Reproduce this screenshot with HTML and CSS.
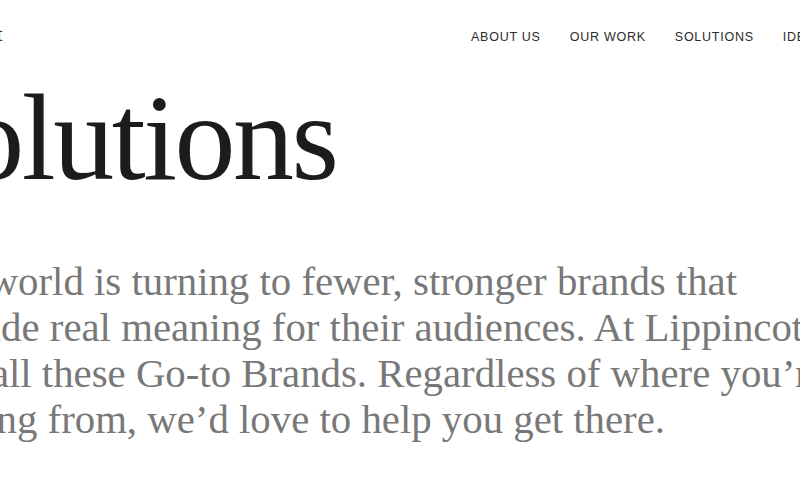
FILE: index.html
```html
<!DOCTYPE html>
<html lang="en">
<head>
<meta charset="utf-8">
<title>Solutions – Lippincott</title>
<link rel="stylesheet" href="styles.css">
</head>
<body>
<div class="page">
  <header class="header">
    <div class="logo">Lippincott</div>
    <nav class="nav">
      <a class="nav-link" href="#">ABOUT US</a>
      <a class="nav-link" href="#">OUR WORK</a>
      <a class="nav-link" href="#">SOLUTIONS</a>
      <a class="nav-link" href="#">IDEAS</a>
    </nav>
  </header>
  <main class="intro">
    <h1 class="title">Solutions</h1>
    <p class="lede">The world is turning to fewer, stronger brands that<br>provide real meaning for their audiences. At Lippincott,<br>we call these Go-to Brands. Regardless of where you’re<br>starting from, we’d love to help you get there.</p>
  </main>
</div>
</body>
</html>
```

FILE: styles.css
```css
html, body {
  margin: 0;
  padding: 0;
  background: #ffffff;
}

body {
  overflow: hidden;
  width: 800px;
  height: 480px;
}

.page {
  margin-left: -80px;
  width: 1200px;
}

.header {
  display: grid;
  grid-template-columns: 551px auto;
  align-items: baseline;
  padding-top: 22px;
}

.logo {
  margin-left: -9px;
  font-family: "Liberation Serif", serif;
  font-size: 22px;
  line-height: 24px;
  color: #333333;
}

.nav {
  display: flex;
  gap: 29px;
}

.nav-link {
  font-family: "Liberation Sans", Arial, sans-serif;
  font-size: 12.5px;
  line-height: 16px;
  letter-spacing: 0.75px;
  color: #2b2b2b;
  text-decoration: none;
  white-space: nowrap;
}

.intro {
  display: flex;
  flex-direction: column;
}

.title {
  margin: 31px 0 0 -22px;
  font-family: "Liberation Serif", serif;
  font-weight: 400;
  font-size: 122px;
  line-height: 122px;
  letter-spacing: -2.5px;
  color: #1c1c1c;
}

.lede {
  margin: 60px 0 0 -5px;
  font-family: "Liberation Serif", serif;
  font-size: 40.8px;
  line-height: 46px;
  color: #787878;
  white-space: nowrap;
}
```
